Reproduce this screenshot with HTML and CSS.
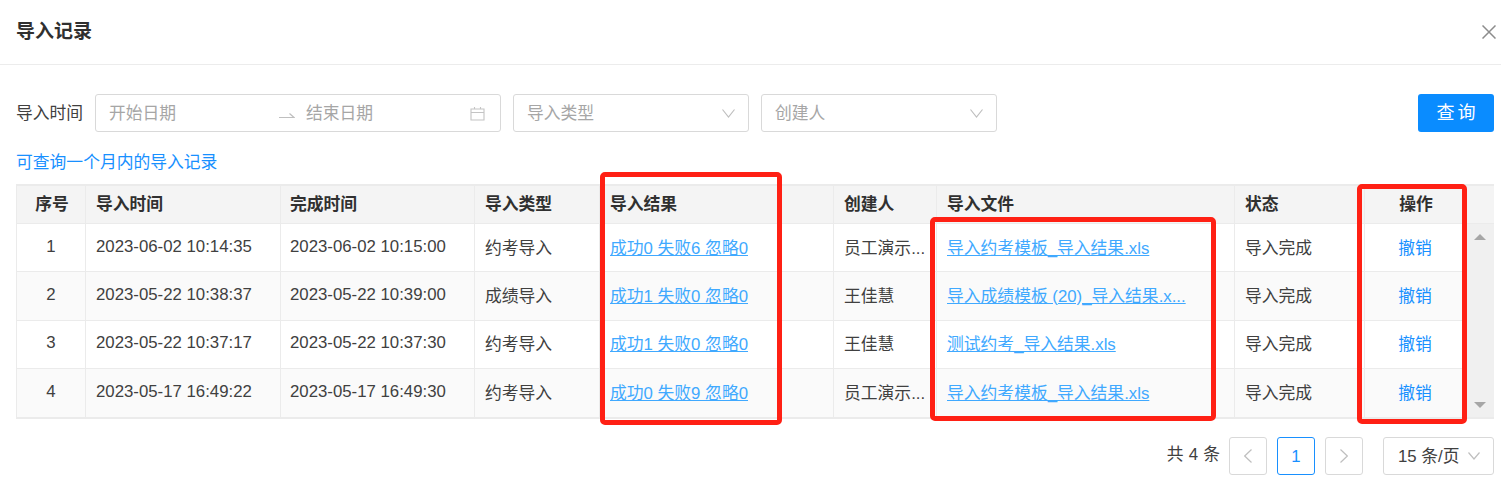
FILE: index.html
```html
<!DOCTYPE html>
<html lang="zh-CN">
<head>
  <meta charset="UTF-8" />
  <meta name="viewport" content="width=device-width, initial-scale=1.0"/>
  <title>导入记录</title>
  <link rel="stylesheet" href="styles.css">
</head>
<body>
  <div class="dialog">
    <div class="dialog-header">
      <h2>导入记录</h2>
      <svg class="close-icon" width="14" height="14" viewBox="0 0 14 14"><path d="M0.5 0.5L13.5 13.5M13.5 0.5L0.5 13.5"/></svg>
    </div>

    <div class="dialog-body">
      <div class="filter-bar">
        <span class="filter-label">导入时间</span>
        <div class="field range-field">
          <span class="range-text">开始日期</span>
          <svg class="range-arrow" width="16" height="8" viewBox="0 0 16 8"><path d="M0 6.5H15L10.5 2.5"/></svg>
          <span class="range-text">结束日期</span>
          <svg class="calendar-icon" width="15" height="15" viewBox="0 0 15 15"><path d="M1 3H14V14H1ZM1 6.5H14M4.5 1V3M10.5 1V3"/></svg>
        </div>
        <div class="field select-field">
          <span>导入类型</span>
          <svg class="chevron" width="13" height="9" viewBox="0 0 13 9"><path d="M0.5 0.5L6.5 8L12.5 0.5"/></svg>
        </div>
        <div class="field select-field">
          <span>创建人</span>
          <svg class="chevron" width="13" height="9" viewBox="0 0 13 9"><path d="M0.5 0.5L6.5 8L12.5 0.5"/></svg>
        </div>
        <button class="search-btn">查询</button>
      </div>

      <p class="hint">可查询一个月内的导入记录</p>

      <table class="record-table">
        <colgroup>
          <col class="col-no"><col class="col-start"><col class="col-end"><col class="col-type"><col class="col-result">
          <col class="col-user"><col class="col-file"><col class="col-status"><col class="col-action"><col class="col-scroll">
        </colgroup>
        <thead>
          <tr>
            <th class="center">序号</th>
            <th>导入时间</th>
            <th>完成时间</th>
            <th>导入类型</th>
            <th>导入结果</th>
            <th>创建人</th>
            <th>导入文件</th>
            <th>状态</th>
            <th class="center">操作</th>
            <th class="scroll-head"></th>
          </tr>
        </thead>
        <tbody>
          <tr>
            <td class="center">1</td>
            <td>2023-06-02 10:14:35</td>
            <td>2023-06-02 10:15:00</td>
            <td>约考导入</td>
            <td><a class="link" href="#">成功0 失败6 忽略0</a></td>
            <td>员工演示...</td>
            <td><a class="link" href="#">导入约考模板_导入结果.xls</a></td>
            <td>导入完成</td>
            <td class="center"><a class="action" href="#">撤销</a></td>
            <td class="scroll-cell" rowspan="4">
              <div class="scrollbar"><i class="tri-up"></i><i class="tri-down"></i></div>
            </td>
          </tr>
          <tr>
            <td class="center">2</td>
            <td>2023-05-22 10:38:37</td>
            <td>2023-05-22 10:39:00</td>
            <td>成绩导入</td>
            <td><a class="link" href="#">成功1 失败0 忽略0</a></td>
            <td>王佳慧</td>
            <td><a class="link" href="#">导入成绩模板 (20)_导入结果.x...</a></td>
            <td>导入完成</td>
            <td class="center"><a class="action" href="#">撤销</a></td>
          </tr>
          <tr>
            <td class="center">3</td>
            <td>2023-05-22 10:37:17</td>
            <td>2023-05-22 10:37:30</td>
            <td>约考导入</td>
            <td><a class="link" href="#">成功1 失败0 忽略0</a></td>
            <td>王佳慧</td>
            <td><a class="link" href="#">测试约考_导入结果.xls</a></td>
            <td>导入完成</td>
            <td class="center"><a class="action" href="#">撤销</a></td>
          </tr>
          <tr>
            <td class="center">4</td>
            <td>2023-05-17 16:49:22</td>
            <td>2023-05-17 16:49:30</td>
            <td>约考导入</td>
            <td><a class="link" href="#">成功0 失败9 忽略0</a></td>
            <td>员工演示...</td>
            <td><a class="link" href="#">导入约考模板_导入结果.xls</a></td>
            <td>导入完成</td>
            <td class="center"><a class="action" href="#">撤销</a></td>
          </tr>
        </tbody>
      </table>

      <div class="pagination">
        <span class="total">共 4 条</span>
        <span class="page-btn"><svg class="page-arrow" width="8" height="14" viewBox="0 0 8 14"><path d="M7.5 0.5L0.7 7L7.5 13.5"/></svg></span>
        <span class="page-btn current">1</span>
        <span class="page-btn"><svg class="page-arrow" width="8" height="14" viewBox="0 0 8 14"><path d="M0.5 0.5L7.3 7L0.5 13.5"/></svg></span>
        <div class="size-select">
          <span>15 条/页</span>
          <svg class="chevron" width="12" height="8" viewBox="0 0 12 8"><path d="M0.5 0.5L6 7L11.5 0.5"/></svg>
        </div>
      </div>
    </div>

    <!-- red marks drawn over the screenshot -->
    <div class="mark mark-result"></div>
    <div class="mark mark-file"></div>
    <div class="mark mark-action"></div>
  </div>
</body>
</html>
```

FILE: styles.css
```css
* {
  margin: 0;
  padding: 0;
  box-sizing: border-box;
}

body {
  background-color: #fff;
  font-family: "Liberation Sans", "Noto Sans CJK SC", sans-serif;
  font-size: 16.8px;
  color: #404040;
}

svg {
  fill: none;
  display: block;
}

.dialog {
  position: relative;
  width: 1501px;
  height: 487px;
  overflow: hidden;
}

.dialog-header {
  display: flex;
  justify-content: space-between;
  align-items: center;
  height: 65px;
  padding: 0 5px 5px 16px;
  border-bottom: 1px solid #ececec;
}

.dialog-header h2 {
  font-size: 19px;
  font-weight: 700;
  color: #303030;
}

.close-icon {
  stroke: #8c8c8c;
  stroke-width: 1.5;
  margin-top: 4px;
}

.dialog-body {
  padding: 29px 7px 0 16px;
}

.filter-bar {
  display: flex;
  align-items: center;
  height: 38px;
}

.filter-label {
  width: 79px;
  padding-bottom: 3px;
}

.field {
  display: flex;
  align-items: center;
  height: 38px;
  border: 1px solid #d9d9d9;
  border-radius: 3px;
  color: #a6a6a6;
}

.field span {
  padding-bottom: 3px;
}

.range-field {
  width: 406px;
  padding: 0 15px 0 13px;
  margin-right: 12px;
}

.range-text {
  width: 164px;
  flex-shrink: 0;
}

.range-text:first-child {
  width: 170px;
}

.range-arrow {
  stroke: #bfbfbf;
  stroke-width: 1.2;
  margin: 3px 11px 0 0;
}

.calendar-icon {
  stroke: #c4c4c4;
  stroke-width: 1.1;
  margin-left: auto;
}

.select-field {
  justify-content: space-between;
  width: 236px;
  padding: 0 13px;
  margin-right: 12px;
}

.chevron {
  stroke: #bfbfbf;
  stroke-width: 1.2;
}

.search-btn {
  width: 76px;
  height: 38px;
  margin-left: auto;
  padding-bottom: 4px;
  border: none;
  border-radius: 3px;
  background-color: #0a8cff;
  color: #fff;
  font-family: inherit;
  font-size: 18px;
  letter-spacing: 3px;
  text-indent: 3px;
}

.hint {
  margin-top: 19px;
  height: 24px;
  line-height: 24px;
  color: #1890ff;
}

.record-table {
  width: 1478px;
  margin-top: 9px;
  table-layout: fixed;
  border-collapse: separate;
  border-spacing: 0;
  border-top: 2px solid #ebebeb;
  border-left: 1px solid #ebebeb;
  border-bottom: 2px solid #ebebeb;
}

.col-no { width: 69px; }
.col-start { width: 195px; }
.col-end { width: 194px; }
.col-type { width: 125px; }
.col-result { width: 234px; }
.col-user { width: 103px; }
.col-file { width: 298px; }
.col-status { width: 130px; }
.col-action { width: 101px; }
.col-scroll { width: 28px; }

.record-table th,
.record-table td {
  padding: 0 10px 3px;
  text-align: left;
  white-space: nowrap;
  border-right: 1px solid #ebebeb;
  border-bottom: 1px solid #ebebeb;
}

.record-table th:nth-child(3),
.record-table td:nth-child(3) {
  padding-left: 9px;
}

.record-table th {
  height: 38px;
  background-color: #f4f4f4;
  font-weight: 700;
  color: #303030;
}

.record-table td {
  height: 48px;
}

.record-table tbody tr:first-child td:not(.scroll-cell) {
  padding-bottom: 1px;
}

.record-table tbody tr:nth-child(2) td {
  height: 49px;
}

.record-table tbody tr:nth-child(even) td {
  background-color: #fafafa;
}

.record-table tbody tr:last-child td {
  border-bottom: none;
}

.record-table .center {
  text-align: center;
}

.record-table th.center {
  padding-left: 11px;
  padding-right: 9px;
}

.record-table .scroll-head {
  padding: 0;
  border-right: none;
}

.record-table .scroll-cell {
  padding: 0;
  border: none;
  background-color: #f0f0f0;
}

.scrollbar {
  display: flex;
  flex-direction: column;
  justify-content: space-between;
  align-items: center;
  height: 193px;
  padding: 10px 0 9px;
}

.tri-up,
.tri-down {
  display: block;
  border-left: 6px solid transparent;
  border-right: 6px solid transparent;
}

.tri-up {
  border-bottom: 6px solid #a6a6a6;
}

.tri-down {
  border-top: 6px solid #a6a6a6;
}

.link {
  color: #40a9ff;
  text-decoration: underline;
}

.action {
  color: #1890ff;
  text-decoration: none;
}

.pagination {
  display: flex;
  align-items: center;
  justify-content: flex-end;
  margin-top: 18px;
  height: 38px;
}

.total {
  margin-right: 9px;
  padding-bottom: 6px;
  word-spacing: 0.5px;
}

.page-btn {
  display: flex;
  align-items: center;
  justify-content: center;
  width: 38px;
  height: 38px;
  margin-right: 10px;
  border: 1px solid #d9d9d9;
  border-radius: 3px;
}

.page-btn.current {
  border-color: #1890ff;
  color: #1890ff;
  padding-top: 1px;
}

.page-arrow {
  stroke: #bfbfbf;
  stroke-width: 1.2;
}

.size-select {
  display: flex;
  align-items: center;
  justify-content: space-between;
  width: 111px;
  height: 38px;
  margin-left: 10px;
  padding: 0 13px 0 14px;
  border: 1px solid #d9d9d9;
  border-radius: 3px;
}

.size-select span {
  white-space: nowrap;
  padding-bottom: 3px;
}

.mark {
  position: absolute;
  border: 5px solid #ff2014;
  border-radius: 5px;
}

.mark-result {
  left: 600px;
  top: 172px;
  width: 182px;
  height: 253px;
}

.mark-file {
  left: 930px;
  top: 217px;
  width: 286px;
  height: 204px;
}

.mark-action {
  left: 1357px;
  top: 184px;
  width: 110px;
  height: 240px;
}
```
